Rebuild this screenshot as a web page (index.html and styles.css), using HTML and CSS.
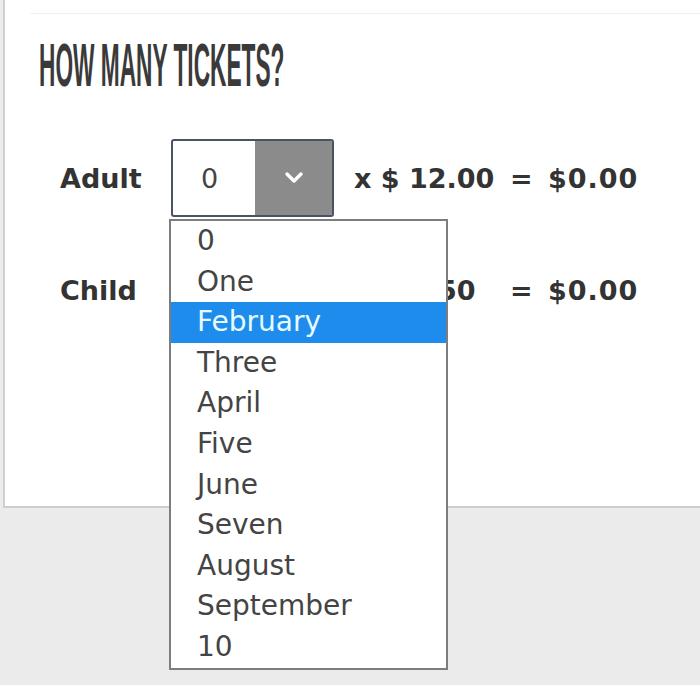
FILE: index.html
```html
<!DOCTYPE html>
<html lang="en">
<head>
<meta charset="utf-8">
<title>How many tickets?</title>
<link rel="stylesheet" href="styles.css">
</head>
<body>
<div class="page">
<div class="card">
  <div class="top-strip"></div>
  <h1 class="title"><span class="title-text">HOW MANY TICKETS?</span></h1>
  <div class="rows">
    <div class="row">
      <div class="label">Adult</div>
      <div class="select-wrap">
        <div class="select">
          <div class="select-value">0</div>
          <div class="select-arrow">
            <svg width="20" height="14" viewBox="0 0 20 14"><polyline points="3,3 10,10 17,3" fill="none" stroke="#ffffff" stroke-width="3.4" stroke-linecap="round" stroke-linejoin="round"/></svg>
          </div>
        </div>
        <ul class="dropdown">
          <li class="option">0</li>
          <li class="option">One</li>
          <li class="option selected">February</li>
          <li class="option">Three</li>
          <li class="option">April</li>
          <li class="option">Five</li>
          <li class="option">June</li>
          <li class="option">Seven</li>
          <li class="option">August</li>
          <li class="option">September</li>
          <li class="option">10</li>
        </ul>
      </div>
      <div class="price">x $ 12.00</div>
      <div class="equals">=</div>
      <div class="total">$0.00</div>
    </div>
    <div class="row">
      <div class="label">Child</div>
      <div class="select-wrap">
        <div class="select">
          <div class="select-value"></div>
          <div class="select-arrow"></div>
        </div>
      </div>
      <div class="price">x $ 7.50</div>
      <div class="equals">=</div>
      <div class="total">$0.00</div>
    </div>
  </div>
</div>
</div>
</body>
</html>
```

FILE: styles.css
```css
html, body {
  margin: 0;
  padding: 0;
}
body {
  background: #ebebeb;
  font-family: "DejaVu Sans", "Liberation Sans", sans-serif;
  color: #333;
  overflow-x: hidden;
}
.page {
  min-height: 685px;
}
.card {
  margin-left: 3px;
  background: #ffffff;
  border-left: 2px solid #cfcfcf;
  border-bottom: 2px solid #cdcdcd;
  padding-bottom: 177px;
}
.top-strip {
  margin-left: 25px;
  height: 13px;
  border-bottom: 1px solid #f1f1f1;
}
.title {
  margin: 21px 0 0 0;
  padding-left: 34px;
  font-family: "Liberation Sans", Arial, sans-serif;
  font-weight: 700;
  font-size: 61px;
  line-height: 61px;
  height: 61px;
  color: #3a3a3a;
  white-space: nowrap;
}
.title-text {
  display: inline-block;
  transform: scaleX(0.372);
  transform-origin: left center;
}
.rows {
  margin-top: 43px;
  padding-left: 53px;
  display: flex;
  flex-direction: column;
  gap: 34px;
}
.row {
  display: grid;
  grid-template-columns: 113px 163px 176px 38px auto;
  align-items: center;
  height: 78px;
  font-weight: 700;
  font-size: 27px;
  color: #333;
}
.label {
  padding-left: 2px;
}
.price {
  margin-left: 20px;
  white-space: nowrap;
}
.total {
  letter-spacing: 1px;
}
.select-wrap {
  position: relative;
  height: 78px;
}
.select {
  box-sizing: border-box;
  height: 78px;
  width: 163px;
  border: 2px solid #4c5266;
  border-radius: 3px;
  display: flex;
  overflow: hidden;
  background: #fff;
}
.select-value {
  width: 82px;
  padding-left: 28px;
  box-sizing: border-box;
  display: flex;
  align-items: center;
  font-weight: 400;
  font-size: 27px;
  color: #444;
}
.select-arrow {
  flex: 1;
  background: #8b8b8b;
  display: flex;
  align-items: center;
  justify-content: center;
}
.dropdown {
  position: absolute;
  z-index: 5;
  top: calc(100% + 2px);
  left: -2px;
  width: 279px;
  box-sizing: border-box;
  margin: 0;
  padding: 0;
  list-style: none;
  background: #ffffff;
  border: 2px solid #7d7d7d;
  font-weight: 400;
}
.option {
  height: 40.6px;
  line-height: 40.6px;
  padding-left: 26px;
  font-size: 28px;
  color: #444;
  white-space: nowrap;
}
.option.selected {
  background: #1e8cec;
  color: #e6fbff;
}
```
